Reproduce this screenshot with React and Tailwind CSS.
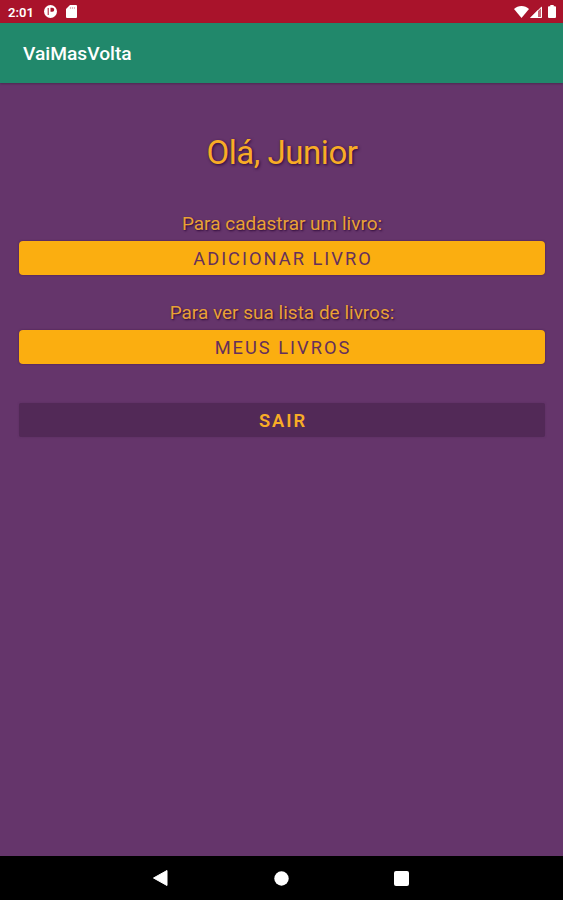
import React from 'react';

const StatusBar = () => {
  return (
    <div className="flex items-center justify-between h-[23px] pl-[8px] pr-[7px] bg-[#a9132b] text-white">
      <div className="flex items-center">
        <span className="w-[36px] text-[13px] leading-[23px] font-semibold pt-[2px]">2:01</span>
        <svg className="w-[13px] h-[13px]" viewBox="0 0 13 13">
          <circle cx="6.5" cy="6.5" r="6.5" fill="#fff" />
          <path d="M4.2 3v7" fill="none" stroke="#a9132b" strokeWidth="1" />
          <path d="M6.5 2.8h1.8a1.9 1.9 0 0 1 0 3.9H6.5z" fill="#a9132b" />
        </svg>
        <svg className="w-[11px] h-[13px] ml-[9px]" viewBox="0 0 11 13">
          <path d="M4 0h6a1 1 0 0 1 1 1v11a1 1 0 0 1-1 1H1a1 1 0 0 1-1-1V4z" fill="#fff" />
          <path d="M4.4 2v2M6.4 2v2M8.4 2v2" stroke="#a9132b" strokeOpacity="0.45" strokeWidth="0.8" />
        </svg>
      </div>
      <div className="flex items-center">
        <svg className="w-[15px] h-[12px]" viewBox="0 0 15 12">
          <path d="M7.5 12L0 2.9C2.1 1 4.6 0 7.5 0S12.9 1 15 2.9z" fill="#fff" />
        </svg>
        <svg className="w-[12px] h-[12px] ml-[1px]" viewBox="0 0 12 12">
          <path d="M0 12L12 0v12z" fill="#fff" fillOpacity="0.35" />
          <path d="M0 12L8 4v8z" fill="#fff" />
          <path d="M1.2 11.5L11.5 1.2v10.3z" fill="none" stroke="#fff" />
        </svg>
        <svg className="w-[8px] h-[13px] ml-[6px]" viewBox="0 0 8 13">
          <path d="M2.3 0h3.4v1.3H7a1 1 0 0 1 1 1V12a1 1 0 0 1-1 1H1a1 1 0 0 1-1-1V2.3a1 1 0 0 1 1-1h1.3z" fill="#fff" />
        </svg>
      </div>
    </div>
  );
};

const NavigationBar = () => {
  return (
    <div className="flex items-center h-[44px] pl-[153px] bg-black">
      <svg className="w-[15px] h-[16px]" viewBox="0 0 15 16">
        <path d="M.5 8L14 .5v15z" fill="#fff" stroke="#fff" strokeLinejoin="round" />
      </svg>
      <svg className="w-[15px] h-[15px] ml-[106px]" viewBox="0 0 15 15">
        <circle cx="7.5" cy="7.5" r="7.2" fill="#fff" />
      </svg>
      <div className="w-[15px] h-[15px] ml-[105px] rounded-[2px] bg-white" />
    </div>
  );
};

const App = () => {
  return (
    <div className="flex flex-col h-screen overflow-hidden bg-[#65356b] font-['Roboto',sans-serif]">
      <StatusBar />

      <header className="relative flex items-center h-[60px] px-[23px] bg-[#21886b] shadow-[0_1px_2px_rgba(0,0,0,0.25)]">
        <h1 className="text-[19.2px] font-medium text-white pt-[3px]">VaiMasVolta</h1>
      </header>

      <main className="flex flex-col flex-1 pl-[19px] pr-[18px] text-center text-[#f8ac26]">
        <h2 className="mt-[50px] text-[33px] tracking-[-0.45px] leading-[40px] [text-shadow:1px_1px_3px_#2c0838]">
          Olá, Junior
        </h2>

        <p className="mt-[38px] text-[19px] leading-[26px] text-[#e9a136] [text-shadow:1px_1px_2px_#2c0838]">
          Para cadastrar um livro:
        </p>
        <button className="h-[34px] mt-[4px] rounded-[4px] bg-[#fbae10] text-[#65305c] text-[18.3px] tracking-[2px] leading-[35px] pl-[2px] shadow-[0_0_2px_rgba(40,0,50,0.5)]">
          ADICIONAR LIVRO
        </button>

        <p className="mt-[25px] text-[19px] leading-[26px] text-[#e9a136] [text-shadow:1px_1px_2px_#2c0838]">
          Para ver sua lista de livros:
        </p>
        <button className="h-[34px] mt-[4px] rounded-[4px] bg-[#fbae10] text-[#65305c] text-[18.3px] tracking-[2px] leading-[35px] pl-[2px] shadow-[0_0_2px_rgba(40,0,50,0.5)]">
          MEUS LIVROS
        </button>

        <button className="h-[34px] mt-[39px] rounded-[2px] bg-[#522957] text-[18.3px] font-semibold tracking-[2px] leading-[35px] pl-[2px] shadow-[0_0_2px_rgba(82,41,87,0.5)]">
          SAIR
        </button>
      </main>

      <NavigationBar />
    </div>
  );
};

export default App;
